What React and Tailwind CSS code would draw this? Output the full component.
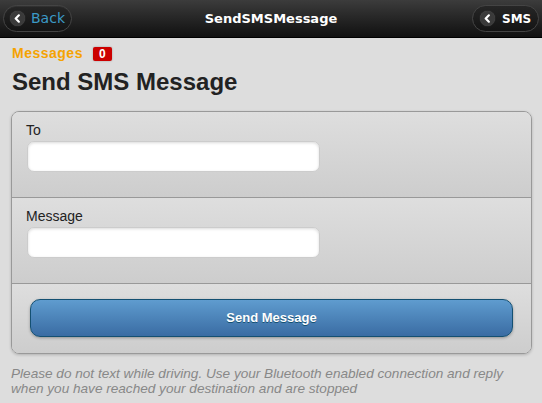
import React from 'react'

const Chevron = () => (
  <span className="flex items-center justify-center w-[15px] h-[15px] rounded-full bg-[#3a3a3a] shadow-[0_0_1px_rgba(255,255,255,0.3)]">
    <svg width="9" height="9" viewBox="0 0 10 10">
      <path d="M6.5 1.5 L3 5 L6.5 8.5" fill="none" stroke="#fff" strokeWidth="2.4" strokeLinecap="round" strokeLinejoin="round" />
    </svg>
  </span>
)

const App = () => {
  return (
    <div className="w-[542px] h-[403px] bg-[#dddddd] overflow-hidden font-['Liberation_Sans',Arial,sans-serif]">
      {/* header bar */}
      <div className="relative h-[38px] bg-gradient-to-b from-[#3c3c3c] to-[#111111] border-b border-[#000] flex items-center justify-between px-[3px]">
        <button className="flex items-center gap-[6px] h-[27px] w-[69px] pl-[6px] rounded-full bg-gradient-to-b from-[#262626] to-[#141414] border border-[#444] shadow-[inset_0_1px_0_rgba(255,255,255,0.05)]">
          <Chevron />
          <span className="text-[14px] text-[#3b99c6] font-['DejaVu_Sans',sans-serif]">Back</span>
        </button>
        <h1 className="absolute left-0 right-0 text-center text-white text-[13px] font-bold font-['DejaVu_Sans',sans-serif] pointer-events-none">
          SendSMSMessage
        </h1>
        <button className="flex items-center gap-[7px] h-[27px] w-[67px] pl-[7px] rounded-full bg-gradient-to-b from-[#262626] to-[#141414] border border-[#444]">
          <Chevron />
          <span className="text-[12px] font-bold text-white font-['DejaVu_Sans',sans-serif]">SMS</span>
        </button>
      </div>

      <div className="px-[11px] pr-[10px]">
        <div className="flex items-center gap-[10px] mt-[8px] h-[15px]">
          <span className="text-[14px] font-bold text-[#f5a301] tracking-[0.5px] ml-[1px]">Messages</span>
          <span className="bg-[#cc0000] text-white text-[12px] font-bold leading-[14px] px-[6px] rounded-[2px] shadow-[0_0_2px_rgba(0,0,0,0.3)]">0</span>
        </div>
        <h2 className="mt-[7px] ml-[1px] text-[24px] font-bold text-[#222] leading-[28px]">Send SMS Message</h2>

        <div className="mt-[15px] rounded-[8px] border border-[#999] shadow-[0_1px_3px_rgba(0,0,0,0.2)] overflow-hidden">
          <div className="h-[86px] bg-gradient-to-b from-[#dedede] to-[#cdcdcd] border-b border-[#999] px-[15px] pt-[9px]">
            <label className="block text-[14px] leading-[18px] text-[#222] ml-[-1px]">To</label>
            <input className="mt-[2px] w-[293px] h-[31px] bg-white rounded-[7px] border border-[#ccc] shadow-[inset_0_1px_3px_rgba(0,0,0,0.15)] outline-none" />
          </div>
          <div className="h-[86px] bg-gradient-to-b from-[#dedede] to-[#cdcdcd] border-b border-[#999] px-[15px] pt-[9px]">
            <label className="block text-[14px] leading-[18px] text-[#222] ml-[-1px]">Message</label>
            <input className="mt-[2px] w-[293px] h-[31px] bg-white rounded-[7px] border border-[#ccc] shadow-[inset_0_1px_3px_rgba(0,0,0,0.15)] outline-none" />
          </div>
          <div className="h-[69px] bg-gradient-to-b from-[#dedede] to-[#cdcdcd] px-[18px] pt-[15px]">
            <button className="w-full h-[38px] rounded-[10px] border border-[#145072] bg-gradient-to-b from-[#5f9ccf] to-[#3a6ca3] text-white text-[13px] font-bold [text-shadow:0_1px_0_#145072] shadow-[0_1px_3px_rgba(0,0,0,0.3)]">
              Send Message
            </button>
          </div>
        </div>

        <p className="mt-[12px] text-[13.6px] italic text-[#888] leading-[15px]">
          Please do not text while driving. Use your Bluetooth enabled connection and reply when you have reached your destination and are stopped
        </p>
      </div>
    </div>
  )
}

export default App
